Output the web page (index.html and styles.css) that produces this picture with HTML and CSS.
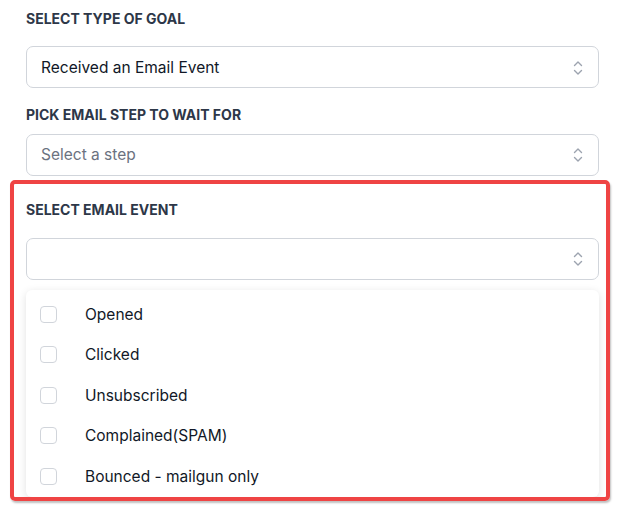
FILE: index.html
```html
<!DOCTYPE html>
<html lang="en">
<head>
<meta charset="utf-8">
<link rel="stylesheet" href="styles.css">
</head>
<body>
<div class="page">
  <div class="label first">SELECT TYPE OF GOAL</div>
  <div class="select">
    <span class="value">Received an Email Event</span>
    <svg class="chev" viewBox="0 0 10 16" width="10" height="16"><path d="M1.5 5.5 5 2l3.5 3.5M1.5 10.5 5 14l3.5-3.5" fill="none" stroke="#9ca3af" stroke-width="1.4" stroke-linecap="round" stroke-linejoin="round"/></svg>
  </div>
  <div class="label second">PICK EMAIL STEP TO WAIT FOR</div>
  <div class="select">
    <span class="placeholder">Select a step</span>
    <svg class="chev" viewBox="0 0 10 16" width="10" height="16"><path d="M1.5 5.5 5 2l3.5 3.5M1.5 10.5 5 14l3.5-3.5" fill="none" stroke="#9ca3af" stroke-width="1.4" stroke-linecap="round" stroke-linejoin="round"/></svg>
  </div>
  <div class="highlight">
    <div class="label third">SELECT EMAIL EVENT</div>
    <div class="select">
      <span class="value"></span>
      <svg class="chev" viewBox="0 0 10 16" width="10" height="16"><path d="M1.5 5.5 5 2l3.5 3.5M1.5 10.5 5 14l3.5-3.5" fill="none" stroke="#9ca3af" stroke-width="1.4" stroke-linecap="round" stroke-linejoin="round"/></svg>
    </div>
    <ul class="menu">
      <li><span class="box"></span>Opened</li>
      <li><span class="box"></span>Clicked</li>
      <li><span class="box"></span>Unsubscribed</li>
      <li><span class="box"></span>Complained(SPAM)</li>
      <li><span class="box"></span>Bounced - mailgun only</li>
    </ul>
  </div>
</div>
</body>
</html>
```
FILE: styles.css
```css
* { box-sizing: border-box; }
html, body { margin: 0; padding: 0; background: #ffffff; }
body { font-family: Inter, "Liberation Sans", sans-serif; color: #111827; }
.page { width: 617px; height: 509px; overflow: hidden; padding: 11px 18px 0 26px; }
.label {
  font-size: 14px; font-weight: 700; line-height: 16px; color: #2d3748;
}
.label.first { margin-bottom: 19px; }
.label.second { margin-top: 18.5px; margin-bottom: 11px; }
.label.third { margin-bottom: 20px; }
.select {
  height: 42px; border: 1px solid #d1d5db; border-radius: 7px;
  display: flex; align-items: center; justify-content: space-between;
  padding: 0 15px 0 14px; font-size: 15.5px; background: #fff;
}
.select .placeholder { color: #6b7280; }
.chev { display: block; margin-top: 1px; }
.highlight {
  margin: 4.5px -11px 0 -16px;
  border: 4px solid #ef4444; border-radius: 5px;
  padding: 17.5px 7px 0 12px;
  height: 321px; overflow: hidden;
  box-shadow: 1px 2px 2px rgba(0,0,0,0.25);
}
.menu {
  list-style: none; margin: 10.5px 0 0 0; padding: 4px 0 0 14px;
  background: #fff;
  box-shadow: 0 2px 8px rgba(0,0,0,0.12);
  border-radius: 6px;
}
.menu li {
  height: 40.5px; display: flex; align-items: center; font-size: 15.5px; color: #111827;
}
.box {
  width: 17px; height: 17px; border: 1px solid #d1d5db; border-radius: 4px;
  margin-right: 28px; flex: none;
}
```
